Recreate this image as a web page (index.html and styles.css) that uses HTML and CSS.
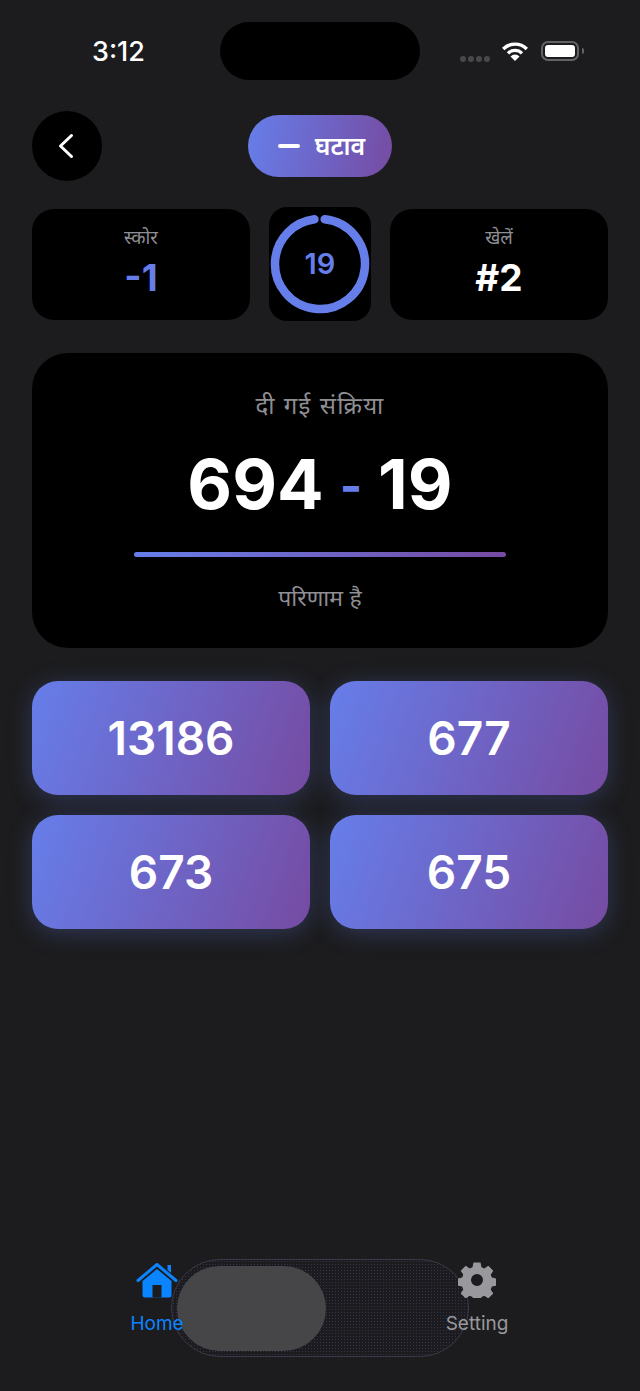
FILE: index.html
```html
<!DOCTYPE html>
<html lang="hi">
<head>
<meta charset="utf-8">
<title>घटाव</title>
<link rel="stylesheet" href="styles.css">
</head>
<body>
<div class="screen">
  <div class="status">
    <span class="time">3:12</span>
    <div class="island"></div>
    <div class="status-icons">
      <div class="dots"><i></i><i></i><i></i><i></i></div>
      <svg class="wifi" width="26" height="20" viewBox="0 0 26 20"><path d="M1.200 8a16.800 16.800 0 0 1 23.600 0" fill="none" stroke="#fff" stroke-width="3.400"/><path d="M6 12.300a9.800 9.800 0 0 1 14 0" fill="none" stroke="#fff" stroke-width="3.200"/><path d="M13 20l-4.500-4.600a6.200 6.200 0 0 1 9 0z" fill="#fff"/></svg>
      <div class="battery"><div class="battery-fill"></div></div>
      <div class="battery-tip"></div>
    </div>
  </div>

  <div class="header">
    <button class="back" aria-label="back">
      <svg width="18" height="26" viewBox="0 0 18 26"><path d="M13.500 2.500L2.500 13l11 10.500" fill="none" stroke="#fff" stroke-width="3" stroke-linecap="round" stroke-linejoin="round"/></svg>
    </button>
    <div class="pill"><span class="minus"></span><span class="pill-text">घटाव</span></div>
  </div>

  <div class="stats">
    <div class="stat">
      <span class="stat-label">स्कोर</span>
      <span class="stat-value accent">-1</span>
    </div>
    <div class="timer">
      <svg class="ring" width="102" height="114" viewBox="0 0 102 114">
        <circle cx="51" cy="57" r="45" fill="none" stroke="#667eea" stroke-width="8.500" stroke-linecap="round" stroke-dasharray="272 282.700" transform="rotate(-84 51 57)"/>
      </svg>
      <span class="timer-num">19</span>
    </div>
    <div class="stat">
      <span class="stat-label">खेलें</span>
      <span class="stat-value">#2</span>
    </div>
  </div>

  <div class="question">
    <span class="q-label">दी गई संक्रिया</span>
    <div class="expr"><span>694</span><span class="op">-</span><span>19</span></div>
    <div class="rule"></div>
    <span class="q-foot">परिणाम है</span>
  </div>

  <div class="options">
    <div class="option">13186</div>
    <div class="option">677</div>
    <div class="option">673</div>
    <div class="option">675</div>
  </div>

  <div class="tabs">
    <div class="glass"><div class="thumb"></div></div>
    <div class="tab active">
      <svg width="42" height="36" viewBox="0 0 42 36"><path d="M2 18.500L21 2.500l19 16" fill="none" stroke="#0a84ff" stroke-width="3" stroke-linecap="round" stroke-linejoin="round"/><path d="M31.500 3h3.500v8l-3.500-3z" fill="#0a84ff"/><path d="M6.500 19L21 7l14.500 12v14a2.500 2.500 0 0 1-2.500 2.500H9a2.500 2.500 0 0 1-2.500-2.500z" fill="#0a84ff"/><rect x="16.500" y="23" width="9" height="12.500" fill="#1c1c1e"/></svg>
      <span>Home</span>
    </div>
    <div class="tab">
      <svg width="38" height="36" viewBox="-18 -18 36 36"><path fill="#98989d" fill-rule="evenodd" d="M-3.500-17.500h7l1 4.700 2.800 1.200 4-2.600 5 5-2.600 4 1.200 2.800 4.700 1v7l-4.700 1-1.200 2.800 2.600 4-5 5-4-2.600-2.800 1.200-1 4.700h-7l-1-4.700-2.800-1.200-4 2.600-5-5 2.600-4-1.200-2.800-4.700-1v-7l4.700-1 1.200-2.800-2.600-4 5-5 4 2.600 2.800-1.200zM0-6a6 6 0 1 0 0 12A6 6 0 0 0 0-6z"/></svg>
      <span>Setting</span>
    </div>
  </div>
</div>
</body>
</html>
```
FILE: styles.css
```css
* { box-sizing: border-box; }
html, body { margin: 0; padding: 0; }
body { background: #1c1c1e; font-family: Inter, "Noto Sans", "Noto Sans Devanagari", "Liberation Sans", sans-serif; color: #fff; }
.screen { width: 640px; height: 1391px; display: flex; flex-direction: column; padding: 0 32px; overflow: hidden; }

.status { height: 111px; flex: none; position: relative; display: flex; align-items: flex-start; justify-content: space-between; }
.time { margin: 37px 0 0 60px; font-size: 27px; line-height: 30px; font-weight: 500; }
.island { position: absolute; left: 188px; top: 22px; width: 200px; height: 58px; border-radius: 29px; background: #000; }
.status-icons { display: flex; align-items: center; margin: 40px 24px 0 0; height: 22px; }
.dots { display: flex; gap: 2px; margin: 16px 12px 0 0; }
.dots i { width: 6px; height: 6px; border-radius: 50%; background: #48484a; }
.wifi { margin-right: 13px; }
.battery { width: 38px; height: 20px; padding: 2px; border: 2px solid #636366; border-radius: 7px; margin-right: 3px; }
.battery-fill { width: 100%; height: 100%; background: #fff; border-radius: 3px; }
.battery-tip { width: 2px; height: 6px; background: #636366; border-radius: 0 2px 2px 0; }

.header { height: 70px; flex: none; position: relative; display: flex; align-items: center; justify-content: center; }
.back { position: absolute; left: 0; top: 0; width: 70px; height: 70px; border: 0; padding: 0; border-radius: 50%; background: #000; display: flex; align-items: center; justify-content: center; }
.pill { width: 144px; height: 62px; border-radius: 31px; background: linear-gradient(100deg, #667eea, #764ba2); display: flex; align-items: center; justify-content: center; gap: 15px; padding-left: 3px; }
.minus { width: 22px; height: 4px; background: #fff; border-radius: 2px; }
.pill-text { font-size: 25px; font-weight: 600; line-height: 30px; }

.stats { display: flex; justify-content: space-between; align-items: center; margin-top: 26px; height: 114px; flex: none; }
.stat { width: 218px; height: 111px; border-radius: 22px; background: #000; display: flex; flex-direction: column; align-items: center; padding-top: 17px; }
.stat-label { font-size: 18.500px; line-height: 22px; color: #8e8e93; }
.stat-value { font-size: 37px; line-height: 44px; font-weight: 700; margin-top: 8px; }
.accent { color: #667eea; }
.timer { width: 102px; height: 114px; border-radius: 18px; background: #000; position: relative; display: flex; align-items: center; justify-content: center; }
.ring { position: absolute; left: 0; top: 0; }
.timer-num { font-size: 29px; line-height: 34px; font-weight: 600; color: #667eea; }

.question { margin-top: 32px; height: 295px; flex: none; border-radius: 36px; background: #000; display: flex; flex-direction: column; align-items: center; padding-top: 38px; }
.q-label, .q-foot { font-size: 23px; line-height: 30px; color: #8e8e93; }
.q-label { letter-spacing: 1.300px; font-size: 24px; }
.expr { display: flex; gap: 16px; align-items: center; font-size: 69px; line-height: 80px; font-weight: 700; margin-top: 21px; }
.op { color: #667eea; font-size: 48px; font-weight: 700; margin-top: 4px; }
.rule { width: 372px; height: 5px; border-radius: 3px; margin-top: 26px; background: linear-gradient(90deg, #667eea, #764ba2); }
.q-foot { margin-top: 26px; }

.options { display: grid; grid-template-columns: 278px 278px; gap: 20px; margin-top: 33px; flex: none; }
.option { height: 114px; border-radius: 26px; background: linear-gradient(110deg, #667eea, #764ba2); box-shadow: 0 4px 24px rgba(102,126,234,.28); display: flex; align-items: center; justify-content: center; font-size: 46px; font-weight: 600; line-height: 54px; }

.tabs { position: absolute; left: 0; top: 1259px; width: 640px; height: 98px; }
.tab { position: absolute; top: 3px; width: 120px; display: flex; flex-direction: column; align-items: center; font-size: 19px; line-height: 24px; color: #98989d; }
.tab svg { display: block; margin-bottom: 14px; }
.tab.active { left: 97px; color: #0a84ff; }
.tab:not(.active) { left: 417px; }
.glass { position: absolute; left: 171px; top: 0; width: 298px; height: 98px; border-radius: 49px; border: 1.500px solid #383a48; background-color: #1b1b20; background-image: radial-gradient(circle, rgba(90,95,130,.38) 0.6px, transparent 0.9px); background-size: 3px 3px; padding: 6px 5px; }
.thumb { width: 149px; height: 85px; border-radius: 43px; background: #464648; }
```
